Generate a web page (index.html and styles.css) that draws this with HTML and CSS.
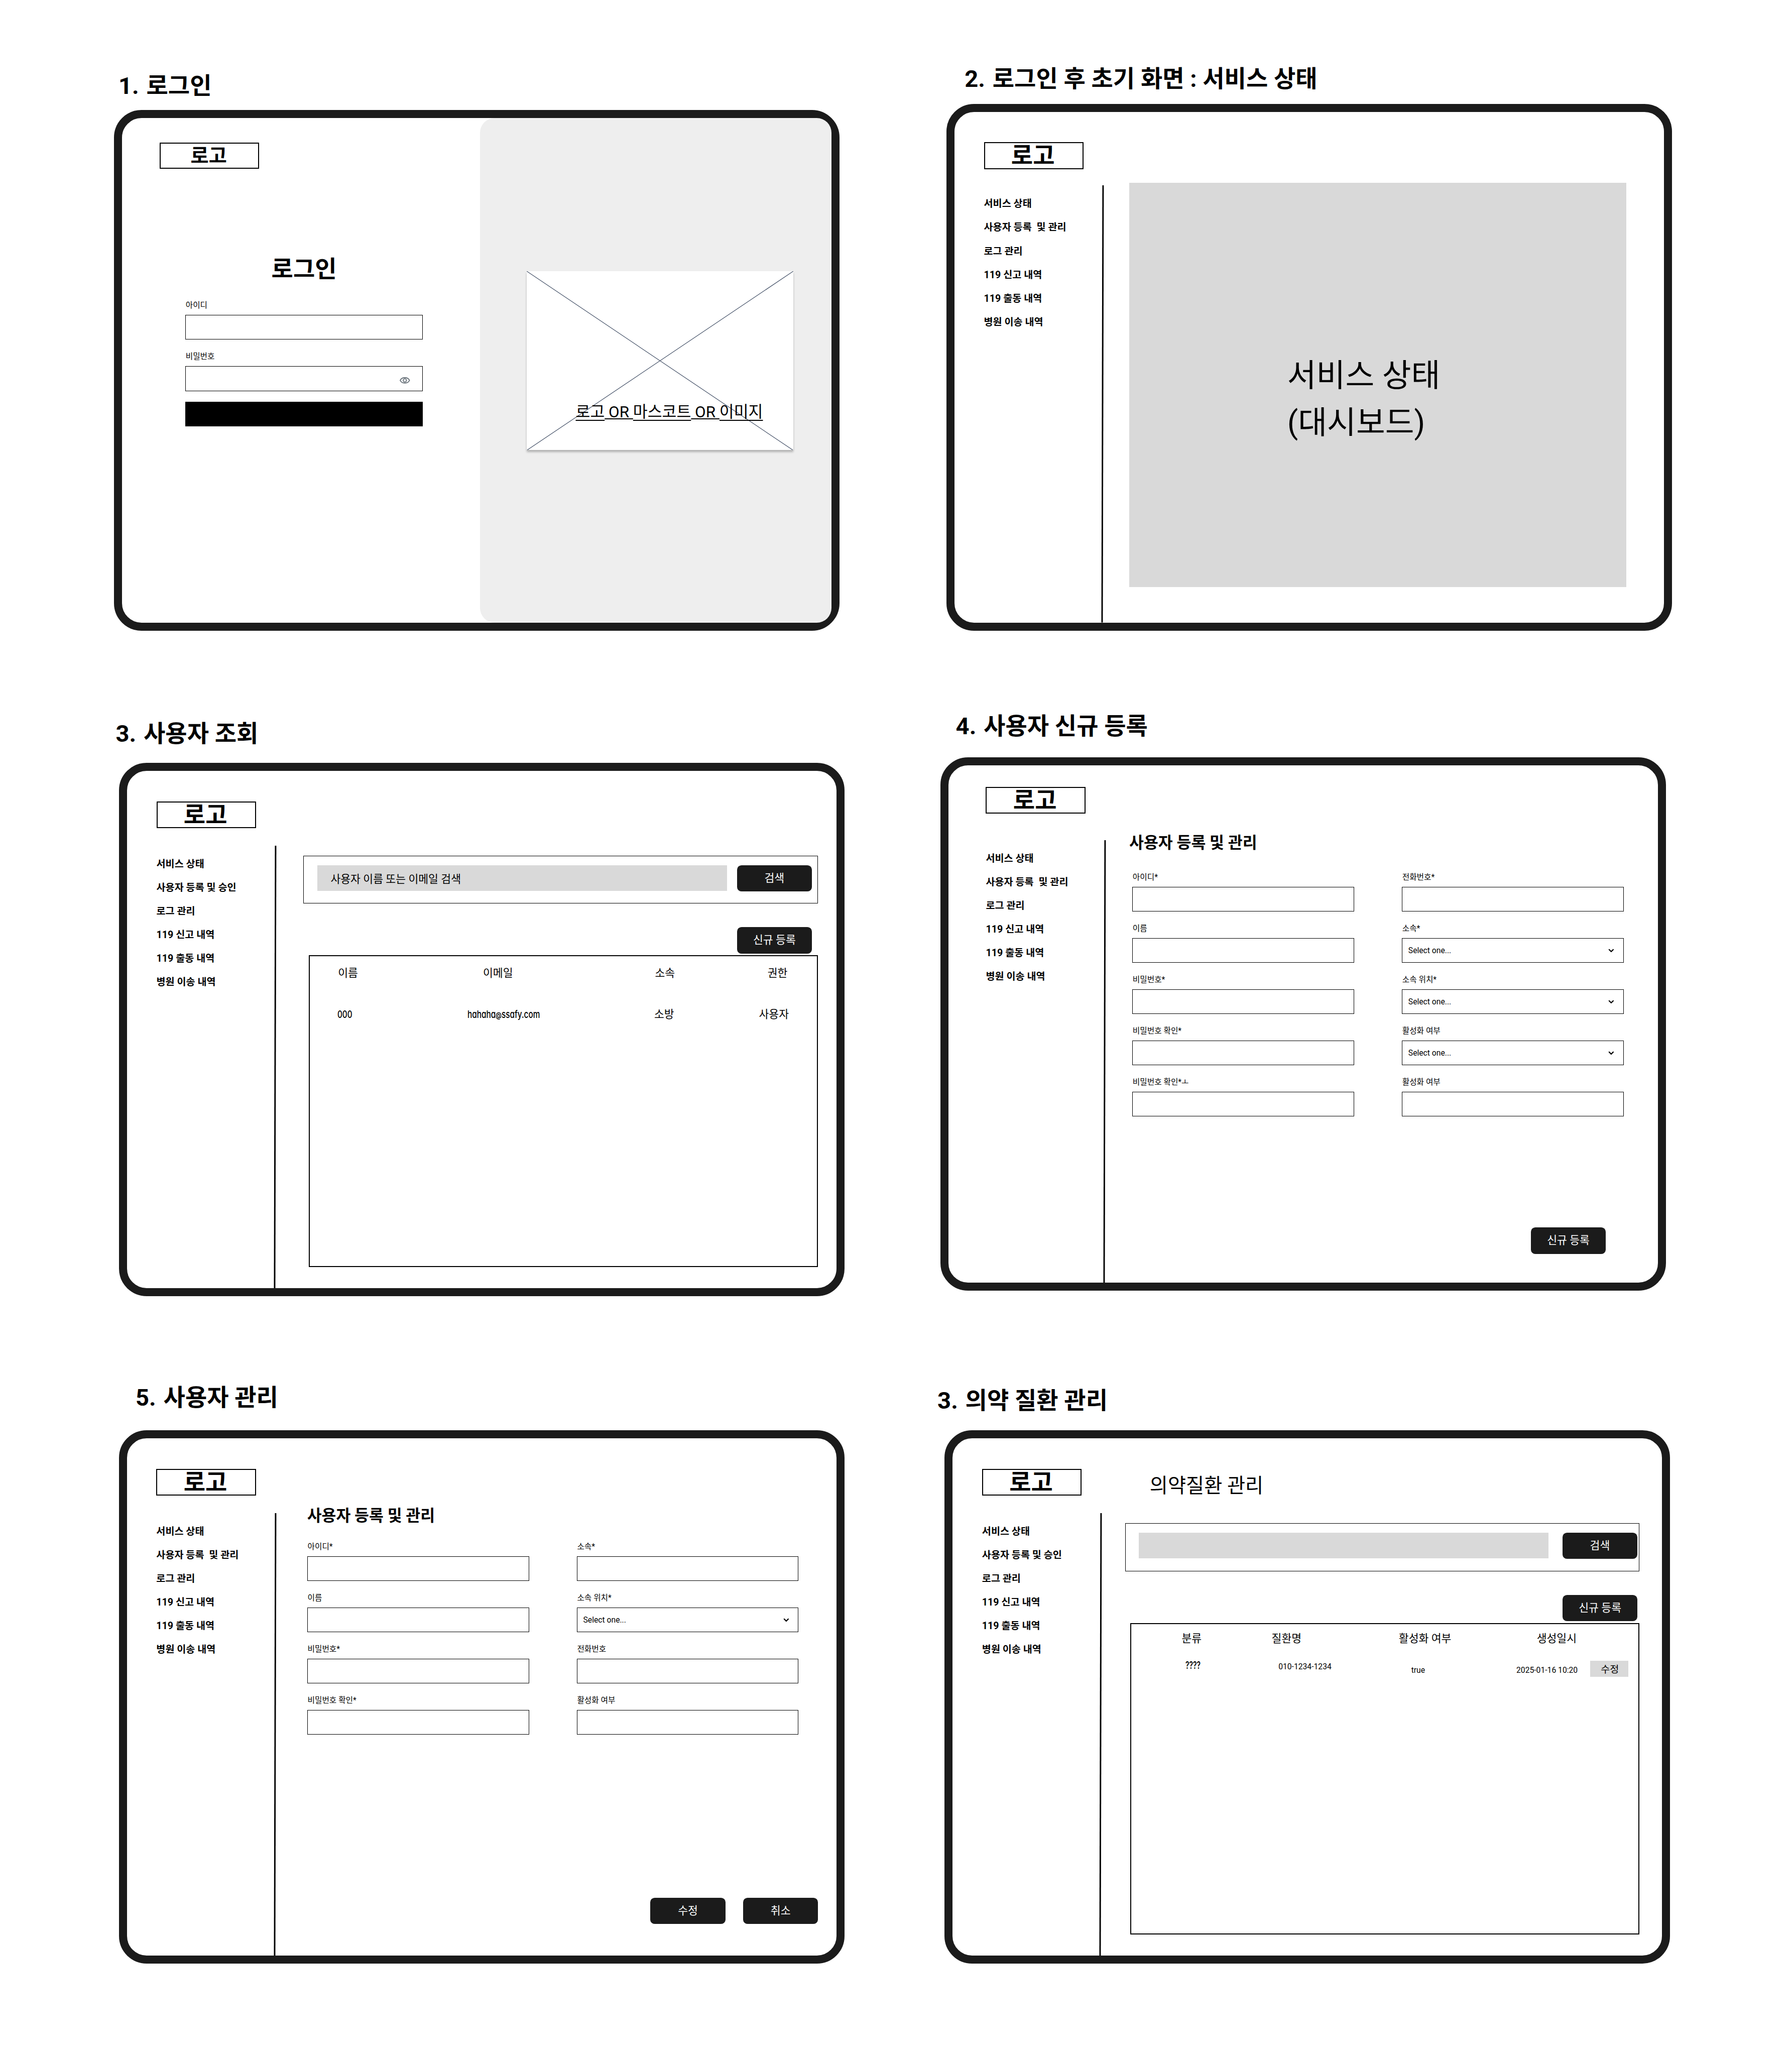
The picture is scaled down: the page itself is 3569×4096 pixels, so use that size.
FILE: index.html
```html
<!DOCTYPE html>
<html lang="ko">
<head>
<meta charset="utf-8">
<title>관리자 화면 와이어프레임</title>
<link rel="stylesheet" href="styles.css">
</head>
<body>
<main class="canvas">

  <section class="artboard artboard-login">
    <h2 class="artboard-title"><span class="num">1.</span>로그인</h2>
    <div class="frame frame-login">
      <div class="login-pane">
        <div class="logo logo-small">로고</div>
        <form class="login-form">
          <h1 class="login-title">로그인</h1>
          <div class="field"><label>아이디</label><div class="input"></div></div>
          <div class="field"><label>비밀번호</label>
            <div class="input input-password">
              <svg class="eye" viewBox="0 0 21 13"><path d="M1 6.5C2.8 2.8 6.3 1 10.5 1s7.700 1.800 9.500 5.500C18.200 10.200 14.700 12 10.500 12S2.800 10.200 1 6.500z"/><circle cx="10.500" cy="6.500" r="3.300"/></svg>
            </div>
          </div>
          <div class="submit"></div>
        </form>
      </div>
      <div class="visual-pane">
        <div class="placeholder">
          <svg class="cross" viewBox="0 0 541 363" preserveAspectRatio="none"><path d="M0 0L541 363M541 0L0 363"/></svg>
          <p class="caption"><span class="ko">로고</span><span class="en"> OR </span><span class="ko">마스코트</span><span class="en"> OR </span><span class="ko">이미지</span></p>
        </div>
      </div>
    </div>
  </section>

  <section class="artboard artboard-status">
    <h2 class="artboard-title"><span class="num">2.</span>로그인 후 초기 화면 : 서비스 상태</h2>
    <div class="frame">
      <aside class="sidebar">
        <div class="logo">로고</div>
        <nav class="menu"><a>서비스 상태</a><a>사용자 등록&nbsp; 및 관리</a><a>로그 관리</a><a>119 신고 내역</a><a>119 출동 내역</a><a>병원 이송 내역</a></nav>
      </aside>
      <svg class="divider" viewBox="0 0 6 900" preserveAspectRatio="none"><path d="M4 0L2 900"/></svg>
      <div class="content">
        <div class="dashboard">서비스 상태<br>(대시보드)</div>
      </div>
    </div>
  </section>

  <section class="artboard artboard-users">
    <h2 class="artboard-title"><span class="num">3.</span>사용자 조회</h2>
    <div class="frame">
      <aside class="sidebar">
        <div class="logo">로고</div>
        <nav class="menu"><a>서비스 상태</a><a>사용자 등록 및 승인</a><a>로그 관리</a><a>119 신고 내역</a><a>119 출동 내역</a><a>병원 이송 내역</a></nav>
      </aside>
      <svg class="divider" viewBox="0 0 6 900" preserveAspectRatio="none"><path d="M4 0L2 900"/></svg>
      <div class="content">
        <div class="search"><div class="search-input">사용자 이름 또는 이메일 검색</div><div class="button">검색</div></div>
        <div class="button button-new">신규 등록</div>
        <div class="table">
          <div class="row row-head"><span>이름</span><span>이메일</span><span>소속</span><span>권한</span></div>
          <div class="row row-body"><span><i class="hand hand-zero">000</i></span><span><i class="hand hand-mail">hahaha<b class="at">@</b>ssafy.com</i></span><span>소방</span><span>사용자</span></div>
        </div>
      </div>
    </div>
  </section>

  <section class="artboard artboard-create">
    <h2 class="artboard-title"><span class="num">4.</span>사용자 신규 등록</h2>
    <div class="frame">
      <aside class="sidebar">
        <div class="logo">로고</div>
        <nav class="menu"><a>서비스 상태</a><a>사용자 등록&nbsp; 및 관리</a><a>로그 관리</a><a>119 신고 내역</a><a>119 출동 내역</a><a>병원 이송 내역</a></nav>
      </aside>
      <svg class="divider" viewBox="0 0 6 900" preserveAspectRatio="none"><path d="M4 0L2 900"/></svg>
      <div class="content">
        <h3 class="heading">사용자 등록 및 관리</h3>
        <div class="fields">
          <div class="field"><label>아이디*</label><div class="input"></div></div>
          <div class="field"><label>전화번호*</label><div class="input"></div></div>
          <div class="field"><label>이름</label><div class="input"></div></div>
          <div class="field"><label>소속*</label><div class="input select">Select one...<svg class="chevron" viewBox="0 0 12 8"><path d="M1.200 1.300L6 6L10.800 1.300"/></svg></div></div>
          <div class="field"><label>비밀번호*</label><div class="input"></div></div>
          <div class="field"><label>소속 위치*</label><div class="input select">Select one...<svg class="chevron" viewBox="0 0 12 8"><path d="M1.200 1.300L6 6L10.800 1.300"/></svg></div></div>
          <div class="field"><label>비밀번호 확인*</label><div class="input"></div></div>
          <div class="field"><label>활성화 여부</label><div class="input select">Select one...<svg class="chevron" viewBox="0 0 12 8"><path d="M1.200 1.300L6 6L10.800 1.300"/></svg></div></div>
          <div class="field"><label>비밀번호 확인*ㅗ</label><div class="input"></div></div>
          <div class="field"><label>활성화 여부</label><div class="input"></div></div>
        </div>
        <div class="actions"><div class="button">신규 등록</div></div>
      </div>
    </div>
  </section>

  <section class="artboard artboard-manage">
    <h2 class="artboard-title"><span class="num">5.</span>사용자 관리</h2>
    <div class="frame">
      <aside class="sidebar">
        <div class="logo">로고</div>
        <nav class="menu"><a>서비스 상태</a><a>사용자 등록&nbsp; 및 관리</a><a>로그 관리</a><a>119 신고 내역</a><a>119 출동 내역</a><a>병원 이송 내역</a></nav>
      </aside>
      <svg class="divider" viewBox="0 0 6 900" preserveAspectRatio="none"><path d="M4 0L2 900"/></svg>
      <div class="content">
        <h3 class="heading">사용자 등록 및 관리</h3>
        <div class="fields">
          <div class="field"><label>아이디*</label><div class="input"></div></div>
          <div class="field"><label>소속*</label><div class="input"></div></div>
          <div class="field"><label>이름</label><div class="input"></div></div>
          <div class="field"><label>소속 위치*</label><div class="input select">Select one...<svg class="chevron" viewBox="0 0 12 8"><path d="M1.200 1.300L6 6L10.800 1.300"/></svg></div></div>
          <div class="field"><label>비밀번호*</label><div class="input"></div></div>
          <div class="field"><label>전화번호</label><div class="input"></div></div>
          <div class="field"><label>비밀번호 확인*</label><div class="input"></div></div>
          <div class="field"><label>활성화 여부</label><div class="input"></div></div>
        </div>
        <div class="actions"><div class="button">수정</div><div class="button">취소</div></div>
      </div>
    </div>
  </section>

  <section class="artboard artboard-disease">
    <h2 class="artboard-title"><span class="num">3.</span>의약 질환 관리</h2>
    <div class="frame">
      <aside class="sidebar">
        <div class="logo">로고</div>
        <nav class="menu"><a>서비스 상태</a><a>사용자 등록 및 승인</a><a>로그 관리</a><a>119 신고 내역</a><a>119 출동 내역</a><a>병원 이송 내역</a></nav>
      </aside>
      <svg class="divider" viewBox="0 0 6 900" preserveAspectRatio="none"><path d="M4 0L2 900"/></svg>
      <div class="content">
        <h3 class="page-title">의약질환 관리</h3>
        <div class="search"><div class="search-input"></div><div class="button">검색</div></div>
        <div class="button button-new">신규 등록</div>
        <div class="table">
          <div class="row row-head"><span>분류</span><span>질환명</span><span>활성화 여부</span><span>생성일시</span></div>
          <div class="row row-body"><span class="code"><i class="hand hand-code">????</i></span><span class="phone">010-1234-1234</span><span class="flag">true</span><span class="date">2025-01-16 10:20</span><span class="edit">수정</span></div>
        </div>
      </div>
    </div>
  </section>

</main>
</body>
</html>
```
FILE: styles.css
```css
* { box-sizing: border-box; }
html, body { margin: 0; padding: 0; background: #fff; overflow: hidden; }
h1, h2, h3, p { margin: 0; }

.canvas {
  position: relative;
  width: 3636px;
  height: 4173px;
  zoom: 0.98155;
  background: #fff;
  color: #000;
  font-family: Roboto, "Noto Sans CJK KR", sans-serif;
  white-space: nowrap;
}

/* Artboards sit freely on the design canvas */
.artboard { position: absolute; width: 1472px; }
.artboard-login { left: 231px; top: 139px; }
.artboard-status { left: 1920.400px; top: 124px; }
.artboard-users { left: 241.400px; top: 1452.300px; }
.artboard-create { left: 1908.400px; top: 1437.600px; }
.artboard-manage { left: 241.200px; top: 2799.400px; }
.artboard-disease { left: 1916.600px; top: 2805.900px; }

.artboard-title {
  height: 72px;
  line-height: 72px;
  font-size: 48px;
  font-weight: 700;
}
.num { display: inline-block; width: 56.500px; }
.artboard-login .artboard-title { margin: 0 0 12.300px 9.500px; }
.artboard-status .artboard-title { margin: 0 0 14.500px 37px; }
.artboard-users .artboard-title { margin: 0 0 23.200px -6.500px; }
.artboard-create .artboard-title { margin: 0 0 26.600px 31px; }
.artboard-manage .artboard-title { margin: 0 0 30.200px 34px; }
.artboard-disease .artboard-title { margin: 0 0 23.600px -14.400px; }

.frame {
  display: grid;
  grid-template-columns: 297.400px 6px 1fr;
  width: 1472px;
  height: 1082px;
  overflow: hidden;
  border: 16.400px solid #1b1b1b;
  border-radius: 56px;
  background: #fff;
}
.frame-login { grid-template-columns: 726.400px 1fr; height: 1056.500px; overflow: visible; }
.artboard-status .frame { height: 1069px; }
.artboard-create .frame { grid-template-columns: 313.400px 6px 1fr; }

/* Sidebar */
.sidebar { padding: 62px 0 0 59.700px; }
.artboard-create .sidebar { padding: 43.900px 0 0 75.700px; }
.logo {
  width: 202px;
  height: 54.300px;
  padding-right: 3px;
  border: 2.100px solid #000;
  font-size: 48px;
  font-weight: 700;
  line-height: 52px;
  text-align: center;
}
.logo-small { height: 53px; font-size: 40px; line-height: 51px; }
.menu { display: flex; flex-direction: column; margin-top: 48.500px; }
.artboard-status .menu { margin-top: 46.500px; }
.artboard-create .menu { margin-top: 66.800px; }
.menu a { font-size: 20px; font-weight: 700; line-height: 48px; }
.divider { width: 6px; height: calc(100% - 151.500px); margin-top: 151.500px; }
.artboard-status .divider { margin-top: 149.500px; height: calc(100% - 149.500px); }
.divider path { fill: none; stroke: #000; stroke-width: 3; }

/* Shared controls */
.button {
  width: 152px;
  height: 53.400px;
  border-radius: 9px;
  background: #1b1b1b;
  color: #fff;
  font-size: 22px;
  line-height: 53px;
  text-align: center;
}
.field label { display: block; height: 24px; margin: 0 0 8px 0.700px; font-size: 16px; line-height: 24px; }
.input { height: 50px; border: 1px solid #000; background: #fff; }
.select {
  display: flex;
  align-items: center;
  justify-content: space-between;
  padding: 0 18px 0 12px;
  font-size: 16px;
}
.chevron { width: 12px; height: 8px; fill: none; stroke: #000; stroke-width: 2.200; }
.heading { font-size: 32px; font-weight: 700; line-height: 48px; }
.fields { display: grid; grid-template-columns: 450px 450px; gap: 22px 97px; }
.actions { display: flex; gap: 36.200px; }

/* 1. Login */
.login-pane { padding: 49.700px 0 0 76.700px; }
.login-form { display: flex; flex-direction: column; gap: 22px; width: 482px; margin: 174px 0 0 52px; }
.login-title { margin-bottom: 9px; font-size: 48px; font-weight: 700; line-height: 60px; text-align: center; }
.input-password { display: flex; align-items: center; justify-content: flex-end; padding: 7px 25px 0 0; }
.eye { width: 21px; height: 13px; fill: none; stroke: #6b747c; stroke-width: 1.900; }
.submit { height: 50px; background: #000; }
.visual-pane { padding: 310.300px 0 0 95px; border-radius: 30px; background: #eee; }
.placeholder {
  position: relative;
  width: 541px;
  height: 363.500px;
  padding: 262px 0 0 99.400px;
  background: #fff;
  box-shadow: 0 4px 4px rgba(0, 0, 0, 0.25);
}
.cross { position: absolute; inset: 0; width: 100%; height: 100%; fill: none; stroke: #4f5b70; stroke-width: 1.300; }
.caption { position: relative; font-size: 32px; line-height: 48px; white-space: pre; }
.caption span { text-decoration: underline; text-decoration-thickness: 1.600px; text-decoration-skip-ink: none; }
.caption .ko { text-underline-offset: 5px; }
.caption .en { text-underline-offset: 2.200px; }

/* 2. Service status */
.dashboard {
  width: 1009px;
  height: 820px;
  margin: 144.300px 0 0 51px;
  padding: 343px 0 0 321px;
  background: #d9d9d9;
  font-size: 64px;
  line-height: 96px;
}

/* List screens */
.search { display: flex; height: 97px; padding-top: 18px; border: 1px solid #000; }
.search-input { width: 831px; height: 52px; padding-left: 26.500px; background: #d9d9d9; font-size: 22px; line-height: 58px; }
.table { height: 632px; border: 2.100px solid #000; }
.row { display: grid; align-items: start; font-size: 22px; line-height: 32px; }

.artboard-users .search { width: 1044px; gap: 20px; margin: 172.300px 0 0 54.100px; padding-left: 28.100px; }
.artboard-users .button-new { margin: 48px 0 0 934.300px; }
.artboard-users .table { width: 1033px; margin: 3.600px 0 0 65.300px; }
.artboard-users .row-head { grid-template-columns: 294.200px 348.800px 228.500px auto; padding: 18.300px 0 0 57.500px; justify-content: start; }
.artboard-users .row-body { grid-template-columns: 263.300px 379px 212.500px auto; padding-left: 56.700px; margin-top: 51px; justify-content: start; }

.artboard-disease .page-title { margin: 67px 0 0 96.600px; font-size: 40px; font-weight: 400; line-height: 60px; }
.artboard-disease .search { width: 1043.500px; gap: 28.300px; margin: 45.700px 0 0 46.500px; padding-left: 27.300px; }
.artboard-disease .button-new { margin: 48px 0 0 934.300px; }
.artboard-disease .table { width: 1032.500px; margin: 3.600px 0 0 57.400px; }
.artboard-disease .row-head { grid-template-columns: 182.500px 258px 280px auto; padding: 13.400px 0 0 102px; justify-content: start; }
.artboard-disease .row-body { grid-template-columns: 189px 269.500px 213.300px 149.700px 77px; padding-left: 109.300px; margin-top: 29px; font-size: 16px; line-height: 20px; }
.phone { margin-top: 2.800px; }
.flag, .date { margin-top: 10px; }
.edit { height: 33px; padding-left: 3px; background: #d9d9d9; font-size: 20px; line-height: 36px; text-align: center; }

/* Hand-lettered sample values: condensed with single-storey a */
.hand {
  display: inline-block;
  font-family: Inter, sans-serif;
  font-style: normal;
  font-size: 21px;
  font-weight: 500;
  font-feature-settings: "cv11";
  transform-origin: left center;
}
.hand-zero { transform: scaleX(0.74); }
.hand-mail { transform: scaleX(0.745); }
.hand-code { font-size: 20px; font-weight: 600; transform: scaleX(0.7); }
.at { font-size: 16px; font-weight: 600; }

/* Form screens */
.artboard-create .heading { margin: 134px 0 32.700px 47.300px; }
.artboard-create .fields { margin-left: 53.500px; }
.artboard-create .actions { margin: 225.400px 0 0 862.200px; }
.artboard-manage .heading { margin: 133.300px 0 26.400px 62.300px; }
.artboard-manage .fields { margin-left: 62.500px; }
.artboard-manage .actions { margin: 330.300px 0 0 758.900px; }
```
